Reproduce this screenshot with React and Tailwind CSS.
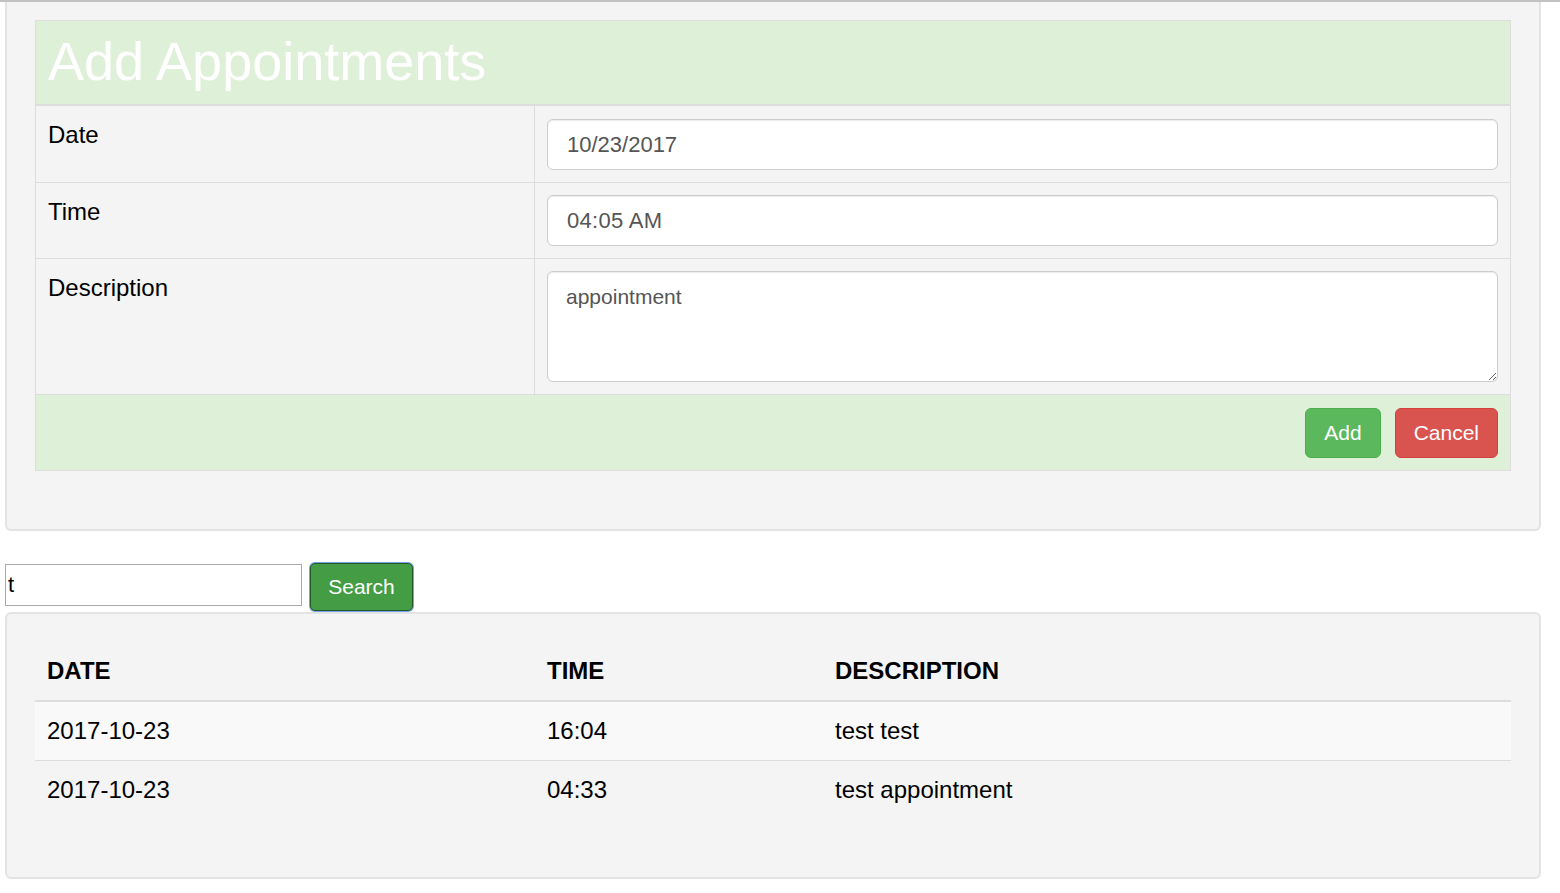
import React from 'react';

const rows = [
  { date: '2017-10-23', time: '16:04', desc: 'test test' },
  { date: '2017-10-23', time: '04:33', desc: 'test appointment' },
];

const inputCls =
  'w-full h-[51px] bg-white border border-[#ccc] rounded-[6px] px-[19px] text-[22px] text-[#555] shadow-[inset_0_1px_1px_rgba(0,0,0,0.075)] outline-none';

export default function App() {
  return (
    <div className="min-h-[893px] bg-white font-['Liberation_Sans',Arial,sans-serif] text-black">
      <div className="h-[2px] bg-[#c2c2c2]" />

      {/* add appointment panel */}
      <div className="ml-[5px] w-[1536px] bg-[#f4f4f4] border-x-2 border-b-2 border-[#e3e3e3] rounded-b-[6px] px-[28px] pt-[18px] pb-[58px]">
        <div className="border border-[#ddd]">
          <div className="h-[85px] bg-[#dff0d8] border-b-2 border-[#ddd] pl-[12px] flex items-center">
            <h1 className="text-[54px] leading-none text-white -mt-[4px]">Add Appointments</h1>
          </div>

          <div className="grid grid-cols-[499px_1fr] border-b border-[#ddd]">
            <div className="border-r border-[#ddd] px-[12px] pt-[12px] text-[24px] leading-[34px]">Date</div>
            <div className="px-[12px] pt-[13px] pb-[12px]">
              <input type="text" defaultValue="10/23/2017" className={inputCls} />
            </div>
          </div>

          <div className="grid grid-cols-[499px_1fr] border-b border-[#ddd]">
            <div className="border-r border-[#ddd] px-[12px] pt-[12px] text-[24px] leading-[34px]">Time</div>
            <div className="px-[12px] pt-[12px] pb-[12px]">
              <input type="text" defaultValue="04:05 AM" className={`${inputCls} tracking-[0.3px]`} />
            </div>
          </div>

          <div className="grid grid-cols-[499px_1fr] border-b border-[#ddd]">
            <div className="border-r border-[#ddd] px-[12px] pt-[12px] text-[24px] leading-[34px]">Description</div>
            <div className="px-[12px] pt-[12px] pb-[12px] flex">
              <textarea
                defaultValue="appointment"
                className="w-full h-[111px] bg-white border border-[#ccc] rounded-[6px] px-[18px] py-[10px] text-[21px] leading-[30px] text-[#555] shadow-[inset_0_1px_1px_rgba(0,0,0,0.075)] outline-none"
              />
            </div>
          </div>

          <div className="h-[75px] bg-[#dff0d8] flex items-center justify-end gap-[14px] pr-[12px]">
            <button className="h-[50px] px-[18px] rounded-[6px] bg-[#5cb85c] border border-[#4cae4c] text-white text-[21px] leading-[30px]">
              Add
            </button>
            <button className="h-[50px] px-[18px] rounded-[6px] bg-[#d9534f] border border-[#d43f3a] text-white text-[21px] leading-[30px]">
              Cancel
            </button>
          </div>
        </div>
      </div>

      {/* search */}
      <div className="flex items-start mt-[31px]">
        <input
          type="text"
          defaultValue="t"
          className="ml-[5px] mt-[2px] w-[297px] h-[42px] border border-[#a9a9a9] bg-white px-[2px] text-[22px] text-black outline-none"
        />
        <button className="ml-[8px] mt-[1px] w-[103px] h-[48px] rounded-[5px] bg-[#449d44] border border-[#255625] shadow-[0_0_0_1px_#74a4ea] text-white text-[21px]">
          Search
        </button>
      </div>

      {/* results panel */}
      <div className="ml-[5px] mt-[1px] w-[1536px] bg-[#f4f4f4] border-2 border-[#e3e3e3] rounded-[6px] px-[28px] pt-[28px] pb-[58px]">
        <div className="grid grid-cols-[500px_288px_1fr] border-b-2 border-[#ddd] text-[24px] font-bold leading-[34px]">
          <div className="px-[12px] py-[12px]">DATE</div>
          <div className="px-[12px] py-[12px]">TIME</div>
          <div className="px-[12px] py-[12px]">DESCRIPTION</div>
        </div>
        {rows.map((r, i) => (
          <div
            key={i}
            className={`grid grid-cols-[500px_288px_1fr] text-[24px] leading-[34px] ${i === 0 ? 'bg-[#f9f9f9] border-b border-[#ddd]' : ''}`}
          >
            <div className="px-[12px] py-[12px]">{r.date}</div>
            <div className="px-[12px] py-[12px]">{r.time}</div>
            <div className="px-[12px] py-[12px]">{r.desc}</div>
          </div>
        ))}
      </div>
    </div>
  );
}
